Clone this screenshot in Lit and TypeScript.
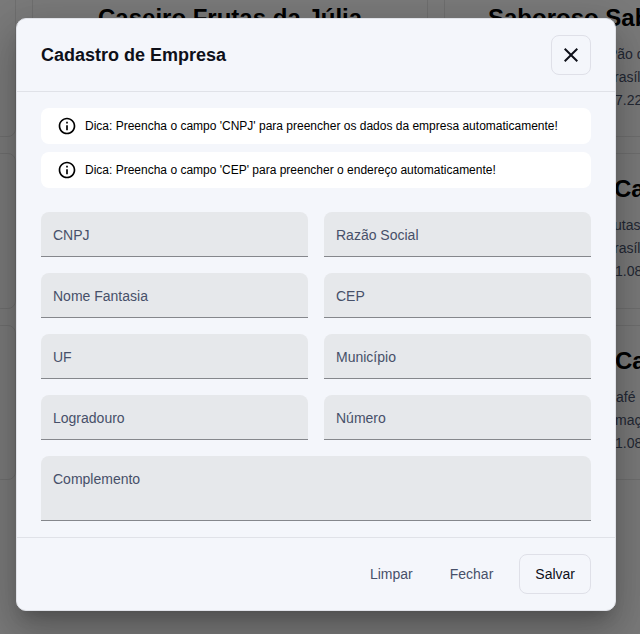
import { LitElement, html, css } from "lit";
import { customElement } from "lit/decorators.js";
import { styleMap } from "lit/directives/style-map.js";

interface Line { text: string; x: number }
interface Card { title?: Line; lines?: Line[] }

const cards: Card[] = [
  {},
  { title: { text: "Caseiro Frutas da Júlia", x: 65 } },
  {
    title: { text: "Saboroso Sab", x: 43 },
    lines: [{ text: "Pão d", x: 163 }, { text: "rasíl", x: 169 }, { text: "7.22", x: 170 }],
  },
  {},
  {},
  {
    title: { text: "Ca", x: 169 },
    lines: [{ text: "utas", x: 169 }, { text: "rasíl", x: 169 }, { text: "1.08", x: 170 }],
  },
  {},
  {},
  {
    title: { text: "Ca", x: 170 },
    lines: [{ text: "afé", x: 171 }, { text: "maç", x: 170 }, { text: "1.08", x: 170 }],
  },
];

const tips = [
  "Dica: Preencha o campo 'CNPJ' para preencher os dados da empresa automaticamente!",
  "Dica: Preencha o campo 'CEP' para preencher o endereço automaticamente!",
];

const fields = ["CNPJ", "Razão Social", "Nome Fantasia", "CEP", "UF", "Município", "Logradouro", "Número"];

@customElement("app-root")
export class AppRoot extends LitElement {
  static styles = css`
    * { box-sizing: border-box; }
    :host {
      display: block;
      position: relative;
      width: 640px;
      height: 634px;
      overflow: hidden;
      background: #f5f5f5;
      font-family: "Liberation Sans", Arial, sans-serif;
    }
    .board {
      display: grid;
      grid-template-columns: repeat(3, 396px);
      grid-auto-rows: 155.6px;
      gap: 16px;
      margin: -18.4px 0 0 -380px;
      width: 1220px;
    }
    .card {
      border: 1px solid #dedede;
      border-radius: 8px;
      padding-top: 21px;
      overflow: hidden;
      white-space: nowrap;
    }
    .card-title { font-size: 24px; font-weight: 700; line-height: 28px; color: #000; margin-bottom: 11px; }
    .card-line { font-size: 14px; line-height: 23px; color: #475069; }
    .overlay {
      position: absolute;
      inset: 0;
      display: flex;
      align-items: flex-start;
      justify-content: center;
      padding: 18px 0 0 0;
      width: 632px;
    }
    .shade { position: absolute; inset: 0; background: rgba(0, 0, 0, 0.5); }
    .dialog {
      position: relative;
      width: 600px;
      height: 593px;
      background: #f4f6fb;
      border: 1px solid #e0e2e8;
      border-radius: 10px;
      display: flex;
      flex-direction: column;
      box-shadow: 0 11px 15px -7px rgba(0, 0, 0, 0.2), 0 24px 38px 3px rgba(0, 0, 0, 0.14),
        0 9px 46px 8px rgba(0, 0, 0, 0.12);
    }
    .header {
      display: flex;
      justify-content: space-between;
      align-items: center;
      height: 73px;
      padding: 0 24px;
      border-bottom: 1px solid #e0e2e8;
    }
    .title { margin: 0; font-size: 18px; font-weight: 700; color: #0e1019; }
    .button {
      height: 40px;
      padding: 0 15px;
      font: 14px "Liberation Sans", Arial, sans-serif;
      border: 1px solid transparent;
      border-radius: 8px;
      background: none;
      color: #475069;
    }
    .outlined { border-color: #dfe0e8; color: #0e1019; }
    .close { width: 40px; padding: 0; display: grid; place-items: center; }
    .body { flex: 1; padding: 16px 24px; }
    .tips { display: grid; gap: 8px; margin-bottom: 24px; }
    .tip {
      display: flex;
      align-items: center;
      gap: 8px;
      height: 36px;
      padding: 0 16px;
      background: #fff;
      border-radius: 8px;
      color: #000;
      font-size: 12px;
      white-space: nowrap;
    }
    .form { display: grid; grid-template-columns: 1fr 1fr; gap: 16px; }
    .field {
      height: 45px;
      padding: 15px 12px 0;
      border-bottom: 1px solid #85878c;
      border-radius: 8px 8px 0 0;
      background: #e6e8eb;
      color: #475069;
      font-size: 14px;
      line-height: 16px;
    }
    .wide { grid-column: 1 / -1; height: 65px; }
    .footer {
      display: flex;
      justify-content: flex-end;
      align-items: center;
      height: 73px;
      padding: 0 24px;
      border-top: 1px solid #e0e2e8;
    }
    .clear { margin-right: 5px; }
    .dismiss { margin-right: 10px; }
  `;

  private line(cls: string, l: Line) {
    return html`<div class=${cls} style=${styleMap({ paddingLeft: `${l.x}px` })}>${l.text}</div>`;
  }

  render() {
    return html`
      <div class="board">
        ${cards.map((c) => html`
          <div class="card">
            ${c.title ? this.line("card-title", c.title) : ""}
            ${(c.lines ?? []).map((l) => this.line("card-line", l))}
          </div>`)}
      </div>
      <div class="shade"></div>
      <div class="overlay">
        <section class="dialog">
          <header class="header">
            <h2 class="title">Cadastro de Empresa</h2>
            <button class="button outlined close" aria-label="Fechar">
              <svg width="24" height="24" viewBox="0 0 24 24" fill="#0e1019">
                <path d="M19 6.41 17.59 5 12 10.59 6.41 5 5 6.41 10.59 12 5 17.59 6.41 19 12 13.41 17.59 19 19 17.59 13.41 12z" />
              </svg>
            </button>
          </header>
          <div class="body">
            <div class="tips">
              ${tips.map((t) => html`
                <div class="tip">
                  <svg width="20" height="20" viewBox="0 0 24 24" fill="currentColor">
                    <path d="M11 7h2v2h-2zm0 4h2v6h-2zm1-9C6.48 2 2 6.48 2 12s4.48 10 10 10 10-4.48 10-10S17.52 2 12 2zm0 18c-4.41 0-8-3.59-8-8s3.59-8 8-8 8 3.59 8 8-3.59 8-8 8z" />
                  </svg>
                  <span>${t}</span>
                </div>`)}
            </div>
            <div class="form">
              ${fields.map((f) => html`<div class="field">${f}</div>`)}
              <div class="field wide">Complemento</div>
            </div>
          </div>
          <footer class="footer">
            <button class="button clear">Limpar</button>
            <button class="button dismiss">Fechar</button>
            <button class="button outlined">Salvar</button>
          </footer>
        </section>
      </div>
    `;
  }
}
